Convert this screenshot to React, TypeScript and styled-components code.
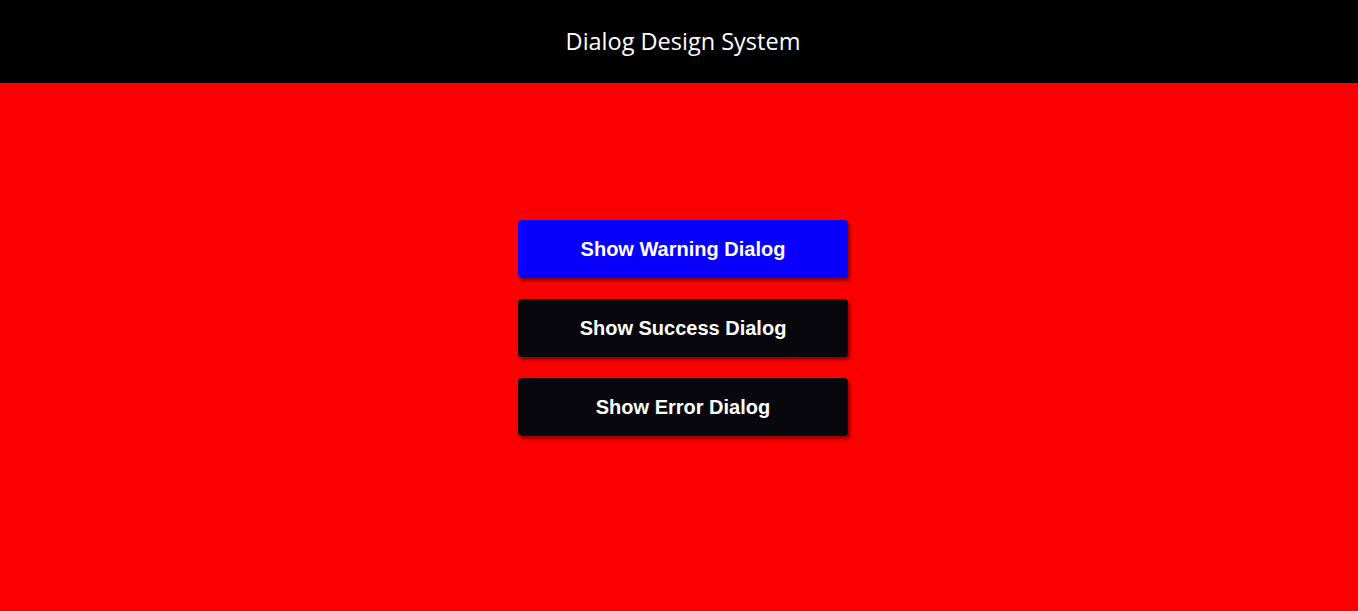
import React from "react";
import styled, { createGlobalStyle } from "styled-components";

const Global = createGlobalStyle`
  html, body { margin: 0; padding: 0; }
  body { background: #fa0000; font-family: "Open Sans", sans-serif; }
`;

const Page = styled.div`
  min-height: 611px;
  display: flex;
  flex-direction: column;
  background: #fa0000;
  padding-left: 8px;
`;

const Header = styled.header`
  height: 83px;
  margin-left: -8px;
  padding-left: 8px;
  background: #000;
  display: flex;
  align-items: center;
  justify-content: center;
`;

const Title = styled.h1`
  margin: 0 0 2px;
  color: #fff;
  font-family: "Open Sans", sans-serif;
  font-weight: 400;
  font-size: 23.5px;
`;

const Main = styled.main`
  display: flex;
  flex-direction: column;
  align-items: center;
  gap: 21px;
  padding-top: 137px;
`;

const Button = styled.button<{ $variant: "primary" | "dark" }>`
  width: 330px;
  height: 58px;
  border: none;
  border-radius: 4px;
  background: ${(p) => (p.$variant === "primary" ? "#0800fa" : "#08080c")};
  color: #fff;
  font-family: "Liberation Sans", Arial, sans-serif;
  font-weight: 700;
  font-size: 20px;
  box-shadow: 2px 3px 3px rgba(0, 0, 0, 0.4);
  cursor: pointer;
`;

export default function App() {
  return (
    <>
      <Global />
      <Page>
        <Header>
          <Title>Dialog Design System</Title>
        </Header>
        <Main>
          <Button $variant="primary">Show Warning Dialog</Button>
          <Button $variant="dark">Show Success Dialog</Button>
          <Button $variant="dark">Show Error Dialog</Button>
        </Main>
      </Page>
    </>
  );
}
